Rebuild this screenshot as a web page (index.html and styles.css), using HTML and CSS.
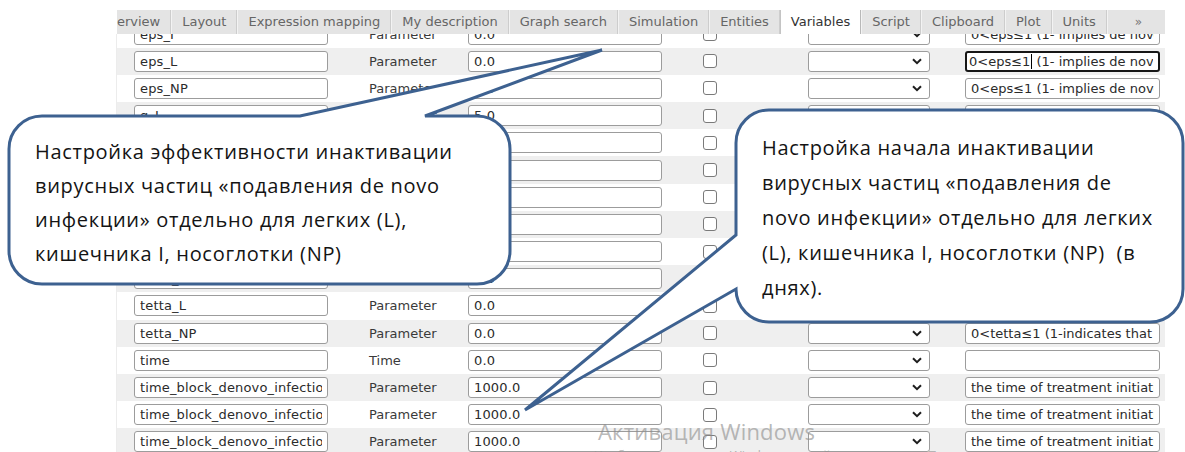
FILE: index.html
```html
<!DOCTYPE html>
<html lang="ru">
<head>
<meta charset="utf-8">
<title>Variables</title>
<link rel="stylesheet" href="styles.css">
</head>
<body>
<div class="app">
  <nav class="tabs">
    <div class="tab-strip">
      <span class="tab">Overview</span>
      <span class="tab">Layout</span>
      <span class="tab">Expression mapping</span>
      <span class="tab">My description</span>
      <span class="tab">Graph search</span>
      <span class="tab">Simulation</span>
      <span class="tab">Entities</span>
      <span class="tab active">Variables</span>
      <span class="tab">Script</span>
      <span class="tab">Clipboard</span>
      <span class="tab">Plot</span>
      <span class="tab">Units</span>
      <span class="tab more">»</span>
    </div>
  </nav>

  <div class="grid-view">
    <div class="rows">
      <div class="row">
        <span class="field"><span class="field-text">eps_I</span></span>
        <span class="type">Parameter</span>
        <span class="field"><span class="field-text">0.0</span></span>
        <span class="cell-check"><span class="check"></span></span>
        <span class="select"><svg class="chev" viewBox="0 0 10 7"><path d="M1 1.2 5 5.2 9 1.2"/></svg></span>
        <span class="cell-comment"><span class="field"><span class="field-text">0&lt;eps≤1 (1- implies de novo infection is blocked)</span></span></span>
      </div>
      <div class="row">
        <span class="field"><span class="field-text">eps_L</span></span>
        <span class="type">Parameter</span>
        <span class="field"><span class="field-text">0.0</span></span>
        <span class="cell-check"><span class="check"></span></span>
        <span class="select"><svg class="chev" viewBox="0 0 10 7"><path d="M1 1.2 5 5.2 9 1.2"/></svg></span>
        <span class="cell-comment"><span class="field focused"><span class="field-text">0&lt;eps≤1<i class="caret"></i> (1- implies de novo infection is blocked)</span></span></span>
      </div>
      <div class="row">
        <span class="field"><span class="field-text">eps_NP</span></span>
        <span class="type">Parameter</span>
        <span class="field"><span class="field-text">0.0</span></span>
        <span class="cell-check"><span class="check"></span></span>
        <span class="select"><svg class="chev" viewBox="0 0 10 7"><path d="M1 1.2 5 5.2 9 1.2"/></svg></span>
        <span class="cell-comment"><span class="field"><span class="field-text">0&lt;eps≤1 (1- implies de novo infection is blocked)</span></span></span>
      </div>
      <div class="row">
        <span class="field"><span class="field-text">g_I</span></span>
        <span class="type">Parameter</span>
        <span class="field"><span class="field-text">5.0</span></span>
        <span class="cell-check"><span class="check"></span></span>
        <span class="select"><svg class="chev" viewBox="0 0 10 7"><path d="M1 1.2 5 5.2 9 1.2"/></svg></span>
        <span class="cell-comment"><span class="field"><span class="field-text">growth rate</span></span></span>
      </div>
      <div class="row">
        <span class="field"><span class="field-text">g_L</span></span>
        <span class="type">Parameter</span>
        <span class="field"><span class="field-text">5.0</span></span>
        <span class="cell-check"><span class="check"></span></span>
        <span class="select"><svg class="chev" viewBox="0 0 10 7"><path d="M1 1.2 5 5.2 9 1.2"/></svg></span>
        <span class="cell-comment"><span class="field"><span class="field-text">growth rate</span></span></span>
      </div>
      <div class="row">
        <span class="field"><span class="field-text">g_NP</span></span>
        <span class="type">Parameter</span>
        <span class="field"><span class="field-text">5.0</span></span>
        <span class="cell-check"><span class="check"></span></span>
        <span class="select"><svg class="chev" viewBox="0 0 10 7"><path d="M1 1.2 5 5.2 9 1.2"/></svg></span>
        <span class="cell-comment"><span class="field"><span class="field-text">growth rate</span></span></span>
      </div>
      <div class="row">
        <span class="field"><span class="field-text">k_I</span></span>
        <span class="type">Parameter</span>
        <span class="field"><span class="field-text">1.0</span></span>
        <span class="cell-check"><span class="check"></span></span>
        <span class="select"><svg class="chev" viewBox="0 0 10 7"><path d="M1 1.2 5 5.2 9 1.2"/></svg></span>
        <span class="cell-comment"><span class="field"><span class="field-text"></span></span></span>
      </div>
      <div class="row">
        <span class="field"><span class="field-text">k_L</span></span>
        <span class="type">Parameter</span>
        <span class="field"><span class="field-text">1.0</span></span>
        <span class="cell-check"><span class="check"></span></span>
        <span class="select"><svg class="chev" viewBox="0 0 10 7"><path d="M1 1.2 5 5.2 9 1.2"/></svg></span>
        <span class="cell-comment"><span class="field"><span class="field-text"></span></span></span>
      </div>
      <div class="row">
        <span class="field"><span class="field-text">k_NP</span></span>
        <span class="type">Parameter</span>
        <span class="field"><span class="field-text">1.0</span></span>
        <span class="cell-check"><span class="check"></span></span>
        <span class="select"><svg class="chev" viewBox="0 0 10 7"><path d="M1 1.2 5 5.2 9 1.2"/></svg></span>
        <span class="cell-comment"><span class="field"><span class="field-text"></span></span></span>
      </div>
      <div class="row">
        <span class="field"><span class="field-text">tetta_I</span></span>
        <span class="type">Parameter</span>
        <span class="field"><span class="field-text">0.0</span></span>
        <span class="cell-check"><span class="check"></span></span>
        <span class="select"><svg class="chev" viewBox="0 0 10 7"><path d="M1 1.2 5 5.2 9 1.2"/></svg></span>
        <span class="cell-comment"><span class="field"><span class="field-text">0&lt;tetta≤1 (1-indicates that virus is inactivated)</span></span></span>
      </div>
      <div class="row">
        <span class="field"><span class="field-text">tetta_L</span></span>
        <span class="type">Parameter</span>
        <span class="field"><span class="field-text">0.0</span></span>
        <span class="cell-check"><span class="check"></span></span>
        <span class="select"><svg class="chev" viewBox="0 0 10 7"><path d="M1 1.2 5 5.2 9 1.2"/></svg></span>
        <span class="cell-comment"><span class="field"><span class="field-text">0&lt;tetta≤1 (1-indicates that virus is inactivated)</span></span></span>
      </div>
      <div class="row">
        <span class="field"><span class="field-text">tetta_NP</span></span>
        <span class="type">Parameter</span>
        <span class="field"><span class="field-text">0.0</span></span>
        <span class="cell-check"><span class="check"></span></span>
        <span class="select"><svg class="chev" viewBox="0 0 10 7"><path d="M1 1.2 5 5.2 9 1.2"/></svg></span>
        <span class="cell-comment"><span class="field"><span class="field-text">0&lt;tetta≤1 (1-indicates that virus is inactivated)</span></span></span>
      </div>
      <div class="row">
        <span class="field"><span class="field-text">time</span></span>
        <span class="type">Time</span>
        <span class="field"><span class="field-text">0.0</span></span>
        <span class="cell-check"><span class="check"></span></span>
        <span class="select"><svg class="chev" viewBox="0 0 10 7"><path d="M1 1.2 5 5.2 9 1.2"/></svg></span>
        <span class="cell-comment"><span class="field"><span class="field-text"></span></span></span>
      </div>
      <div class="row">
        <span class="field"><span class="field-text">time_block_denovo_infection_I</span></span>
        <span class="type">Parameter</span>
        <span class="field"><span class="field-text">1000.0</span></span>
        <span class="cell-check"><span class="check"></span></span>
        <span class="select"><svg class="chev" viewBox="0 0 10 7"><path d="M1 1.2 5 5.2 9 1.2"/></svg></span>
        <span class="cell-comment"><span class="field"><span class="field-text">the time of treatment initiation</span></span></span>
      </div>
      <div class="row">
        <span class="field"><span class="field-text">time_block_denovo_infection_L</span></span>
        <span class="type">Parameter</span>
        <span class="field"><span class="field-text">1000.0</span></span>
        <span class="cell-check"><span class="check"></span></span>
        <span class="select"><svg class="chev" viewBox="0 0 10 7"><path d="M1 1.2 5 5.2 9 1.2"/></svg></span>
        <span class="cell-comment"><span class="field"><span class="field-text">the time of treatment initiation</span></span></span>
      </div>
      <div class="row">
        <span class="field"><span class="field-text">time_block_denovo_infection_NP</span></span>
        <span class="type">Parameter</span>
        <span class="field"><span class="field-text">1000.0</span></span>
        <span class="cell-check"><span class="check"></span></span>
        <span class="select"><svg class="chev" viewBox="0 0 10 7"><path d="M1 1.2 5 5.2 9 1.2"/></svg></span>
        <span class="cell-comment"><span class="field"><span class="field-text">the time of treatment initiation</span></span></span>
      </div>
    </div>
  </div>
</div>

<!-- annotation callouts drawn over the table -->
<svg class="callout-shapes" width="1185" height="452" viewBox="0 0 1185 452">
  <path d="M43 116 H300 L602 50 L425 116 H477 A33 33 0 0 1 510 149 V251 A33 33 0 0 1 477 284 H42 A33 33 0 0 1 9 251 V149 A33 33 0 0 1 42 116 Z"/>
  <path d="M769 110 H1150 A33 33 0 0 1 1183 143 V289 A33 33 0 0 1 1150 322 H769 A33 33 0 0 1 736 289 L525 410 L736 235 V143 A33 33 0 0 1 769 110 Z"/>
</svg>
<p class="note note-left">Настройка эффективности инактивации<br>вирусных частиц «подавления de novo<br>инфекции» отдельно для легких (L),<br>кишечника I, носоглотки (NP)</p>
<p class="note note-right">Настройка начала инактивации<br>вирусных частиц «подавления de<br>novo инфекции» отдельно для легких<br>(L), кишечника I, носоглотки (NP)&nbsp; (в<br>днях).</p>

<div class="watermark">
  <div class="wm-title">Активация Windows</div>
  <div class="wm-sub">Чтобы активировать Windows, перейдите в раздел «Параметры».</div>
</div>
</body>
</html>
```

FILE: styles.css
```css
* {
  box-sizing: border-box;
}

html,
body {
  margin: 0;
  padding: 0;
}

body {
  width: 1185px;
  height: 452px;
  overflow: hidden;
  background: #fff;
  position: relative;
  font-family: "DejaVu Sans", Verdana, sans-serif;
  color: #2a2a2a;
}

/* page column: tab bar on top, variable grid below */
.app {
  display: flex;
  flex-direction: column;
  width: 1048px;
  height: 452px;
  margin-left: 117px;
  padding-top: 10px;
}

/* ---------- tabs ---------- */
.tabs {
  flex: none;
  height: 24px;
  background: #e4e4e4;
  overflow: hidden;
  position: relative;
  z-index: 1;
}

.tab-strip {
  display: flex;
  margin-left: -29px;
  height: 24px;
}

.tab {
  flex: none;
  padding: 0 10px;
  font-size: 13px;
  line-height: 24px;
  color: #666;
  white-space: nowrap;
  border-left: 1px solid #f3f3f3;
  border-right: 1px solid #cdcdcd;
}

.tab.active {
  background: #fff;
  color: #333;
  border-left-color: #c4c4c4;
  border-right-color: #b8b8b8;
}

.tab.more {
  width: 62px;
  text-align: center;
  font-size: 12px;
  color: #777;
  border-right: none;
}

/* ---------- grid of variables ---------- */
.grid-view {
  flex: 1;
  overflow: hidden;
  border-left: 1px solid #ececec;
  margin-left: -1px;
}

.rows {
  margin-top: -13.5px;
}

.row {
  height: 27.2px;
  display: grid;
  grid-template-columns: 194px 140px 194px 146px 122px 230px;
  align-items: center;
  padding-left: 17px;
}

.row:nth-child(even) {
  background: #efefef;
}

.field {
  display: block;
  height: 21px;
  padding: 0 5px 0 5px;
  border: 1px solid #9c9c9c;
  border-radius: 3px;
  background: #fff;
  font-size: 13px;
  line-height: 19px;
  color: #2b2b2b;
}

.field-text {
  display: block;
  overflow: hidden;
  white-space: nowrap;
  letter-spacing: 0.15px;
}

.cell-comment .field-text {
  letter-spacing: 0;
}

.field.focused {
  border: 2px solid #161616;
  padding-left: 2px;
  line-height: 17px;
}

.caret {
  display: inline-block;
  width: 0;
  height: 15px;
  border-left: 1px solid #000;
  vertical-align: -3px;
  margin-left: 1px;
}

.type {
  padding-left: 41px;
  font-size: 13px;
  color: #3a3a3a;
}

.cell-check {
  padding-left: 41px;
  display: flex;
}

.check {
  width: 14px;
  height: 14px;
  border: 1px solid #7a7a7a;
  border-radius: 3px;
  background: #fff;
}

.select {
  height: 21px;
  border: 1px solid #9c9c9c;
  border-radius: 3px;
  background: #fff;
  display: flex;
  align-items: center;
  justify-content: flex-end;
  padding-right: 7px;
}

.chev {
  width: 10px;
  height: 7px;
  fill: none;
  stroke: #1e1e1e;
  stroke-width: 2;
}

.cell-comment {
  padding-left: 35px;
}

/* ---------- callouts ---------- */
.callout-shapes {
  position: absolute;
  left: 0;
  top: 0;
  z-index: 2;
}

.callout-shapes path {
  fill: #fff;
  stroke: #3d6190;
  stroke-width: 3;
  stroke-linejoin: miter;
}

.note {
  position: absolute;
  z-index: 3;
  margin: 0;
  font-family: "Open Sans", "Noto Sans", sans-serif;
  font-size: 20px;
  letter-spacing: 0.7px;
  color: #141414;
  white-space: nowrap;
}

.note-left {
  left: 35px;
  top: 135px;
  line-height: 34px;
}

.note-right {
  left: 762px;
  top: 129.5px;
  line-height: 35px;
}

/* ---------- OS activation watermark ---------- */
.watermark {
  position: absolute;
  z-index: 4;
  left: 598px;
  top: 416px;
  color: rgba(140, 140, 140, 0.62);
  font-family: "Open Sans", "Noto Sans", sans-serif;
  pointer-events: none;
}

.wm-title {
  font-size: 22px;
  line-height: 30px;
  letter-spacing: 0.2px;
}

.wm-sub {
  font-size: 13px;
  line-height: 18px;
  margin-left: -4px;
}
```
